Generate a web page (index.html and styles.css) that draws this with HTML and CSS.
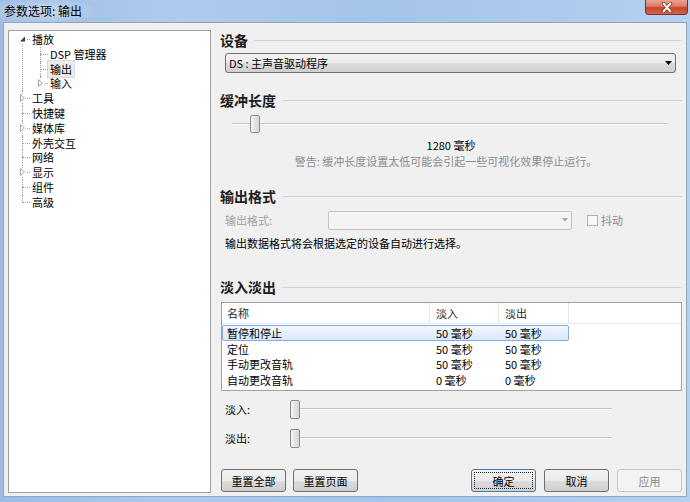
FILE: index.html
```html
<!DOCTYPE html>
<html lang="zh-CN">
<head>
    <meta charset="UTF-8">
    <title>参数选项: 输出</title>
    <link rel="stylesheet" href="styles.css">
</head>
<body>
<div class="window">
    <div class="titlebar">
        <span class="title">参数选项: 输出</span>
        <div class="close-btn">
            <svg width="14" height="11" viewBox="0 0 14 11">
                <path d="M3.5 1.5 L10.5 9.5 M10.5 1.5 L3.5 9.5" stroke="#6b2418" stroke-width="3.4" stroke-linecap="round"/>
                <path d="M3.5 1.5 L10.5 9.5 M10.5 1.5 L3.5 9.5" stroke="#fff" stroke-width="1.9" stroke-linecap="round"/>
            </svg>
        </div>
    </div>

    <div class="content">
        <!-- left tree -->
        <div class="tree-panel">
            <div class="item first">
                <div class="row">
                    <svg class="toggle" width="7" height="8" viewBox="0 0 7 8"><path d="M6 1.5 L6 6.5 L1 6.5 Z" fill="#3c3c3c"/></svg>
                    播放
                </div>
                <div class="children">
                    <div class="item"><div class="row">DSP 管理器</div></div>
                    <div class="item"><div class="row"><span class="sel">输出</span></div></div>
                    <div class="item last">
                        <div class="row">
                            <svg class="toggle" width="7" height="8" viewBox="0 0 7 8"><path d="M1.5 0.5 L5.5 4 L1.5 7.5 Z" fill="#fff" stroke="#a6a6a6"/></svg>
                            输入
                        </div>
                    </div>
                </div>
            </div>
            <div class="item">
                <div class="row">
                    <svg class="toggle" width="7" height="8" viewBox="0 0 7 8"><path d="M1.5 0.5 L5.5 4 L1.5 7.5 Z" fill="#fff" stroke="#a6a6a6"/></svg>
                    工具
                </div>
            </div>
            <div class="item"><div class="row">快捷键</div></div>
            <div class="item">
                <div class="row">
                    <svg class="toggle" width="7" height="8" viewBox="0 0 7 8"><path d="M1.5 0.5 L5.5 4 L1.5 7.5 Z" fill="#fff" stroke="#a6a6a6"/></svg>
                    媒体库
                </div>
            </div>
            <div class="item"><div class="row">外壳交互</div></div>
            <div class="item"><div class="row">网络</div></div>
            <div class="item">
                <div class="row">
                    <svg class="toggle" width="7" height="8" viewBox="0 0 7 8"><path d="M1.5 0.5 L5.5 4 L1.5 7.5 Z" fill="#fff" stroke="#a6a6a6"/></svg>
                    显示
                </div>
            </div>
            <div class="item"><div class="row">组件</div></div>
            <div class="item last"><div class="row">高级</div></div>
        </div>

        <!-- right page -->
        <div class="page">
            <div class="section-head">设备</div>
            <div class="combo">
                <span>DS : 主声音驱动程序</span>
                <svg width="7" height="4" viewBox="0 0 7 4"><path d="M0 0 L7 0 L3.5 4 Z" fill="#000"/></svg>
            </div>

            <div class="section-head buffer-head">缓冲长度</div>
            <div class="slider buffer-slider">
                <div class="thumb" style="margin-left: 18px"></div>
            </div>
            <div class="buffer-value">1280 毫秒</div>
            <div class="warning">警告: 缓冲长度设置太低可能会引起一些可视化效果停止运行。</div>

            <div class="section-head format-head">输出格式</div>
            <div class="format-row">
                <span class="format-label">输出格式:</span>
                <div class="combo disabled">
                    <span></span>
                    <svg width="6" height="4" viewBox="0 0 6 4"><path d="M0 0 L6 0 L3 3.5 Z" fill="#a8a8a8"/></svg>
                </div>
                <div class="check"><span class="box"></span>抖动</div>
            </div>
            <div class="info">输出数据格式将会根据选定的设备自动进行选择。</div>

            <div class="section-head fade-head">淡入淡出</div>
            <div class="list">
                <div class="list-header">
                    <div>名称</div>
                    <div>淡入</div>
                    <div>淡出</div>
                    <div class="filler"></div>
                </div>
                <div class="list-row selected"><div>暂停和停止</div><div>50 毫秒</div><div>50 毫秒</div></div>
                <div class="list-row"><div>定位</div><div>50 毫秒</div><div>50 毫秒</div></div>
                <div class="list-row"><div>手动更改音轨</div><div>50 毫秒</div><div>50 毫秒</div></div>
                <div class="list-row"><div>自动更改音轨</div><div>0 毫秒</div><div>0 毫秒</div></div>
            </div>

            <div class="fade-row">
                <span class="fade-label">淡入:</span>
                <div class="slider fade-slider"><div class="thumb"></div></div>
            </div>
            <div class="fade-row second">
                <span class="fade-label">淡出:</span>
                <div class="slider fade-slider"><div class="thumb"></div></div>
            </div>

            <div class="buttons">
                <div class="btn-group">
                    <button class="btn">重置全部</button>
                    <button class="btn">重置页面</button>
                </div>
                <div class="btn-group">
                    <button class="btn default"><span>确定</span></button>
                    <button class="btn">取消</button>
                    <button class="btn" disabled>应用</button>
                </div>
            </div>
        </div>
    </div>
</div>
</body>
</html>
```

FILE: styles.css
```css
* {
    box-sizing: border-box;
}
body {
    margin: 0;
    font-family: "Noto Sans CJK SC", "Liberation Sans", sans-serif;
    font-size: 11px;
    color: #000;
    background: #a8c6ea;
}
.window {
    width: 690px;
    height: 502px;
    display: flex;
    flex-direction: column;
    background: linear-gradient(to right, #9dbce2 0%, #aecbee 25%, #a5c4e9 55%, #b4d0f0 100%);
}

/* title bar */
.titlebar {
    height: 22px;
    display: flex;
    align-items: flex-start;
    background: radial-gradient(ellipse 60px 14px at 40px 11px, rgba(255, 255, 255, 0.45), rgba(255, 255, 255, 0));
}
.title {
    font-size: 12px;
    line-height: 22px;
    padding-left: 4px;
    color: #000;
}
.close-btn {
    margin-left: auto;
    margin-right: 2px;
    width: 43px;
    height: 15px;
    border: 1px solid #7b3325;
    border-top: none;
    border-radius: 0 0 4px 4px;
    background: linear-gradient(#eaa694 0%, #dc7a62 45%, #c7432b 55%, #d4654b 100%);
    display: flex;
    align-items: center;
    justify-content: center;
}

/* dialog body */
.content {
    flex: 1;
    margin: 0 3px 5px;
    background: #f0f0f0;
    border: 1px solid #8fa6c1;
    display: flex;
    padding: 7px 4px 3px 4px;
}

/* tree */
.tree-panel {
    width: 203px;
    margin-right: 9px;
    background: #fff;
    border: 1px solid #a0a0a0;
    padding: 1px 0 0 13px;
    font-size: 11px;
}
.item {
    position: relative;
    padding-left: 10px;
}
.item::before {
    content: "";
    position: absolute;
    left: 0;
    top: 0;
    bottom: 0;
    border-left: 1px dotted #a0a0a0;
}
.item.first::before {
    top: 9px;
}
.item.last::before {
    bottom: auto;
    height: 8px;
}
.row {
    position: relative;
    height: 14.8px;
    line-height: 14.8px;
    white-space: nowrap;
}
.row::before {
    content: "";
    position: absolute;
    left: -10px;
    width: 8px;
    top: 7px;
    border-top: 1px dotted #a0a0a0;
}
.toggle {
    position: absolute;
    left: -13px;
    top: 3px;
    background: #fff;
}
.children {
    padding-left: 8px;
}
.sel {
    margin-left: -3px;
    padding: 0 2px;
    border: 1px solid #d9d9d9;
    background: #ececec;
}

/* right page */
.page {
    width: 462px;
    display: flex;
    flex-direction: column;
}
.section-head {
    display: flex;
    align-items: center;
    height: 16px;
    margin-top: 2px;
    font-size: 14px;
    font-weight: bold;
    color: #1c1c1c;
}
.section-head::after {
    content: "";
    flex: 1;
    margin-left: 6px;
    border-top: 1px solid #d2d2d2;
}
.buffer-head {
    margin-top: 19px;
}
.format-head {
    margin-top: 19px;
}
.fade-head {
    margin-top: 29px;
}

.combo {
    height: 20px;
    margin: 5px 6px 0 5px;
    padding: 0 3px 0 3px;
    border: 1px solid #707070;
    border-radius: 3px;
    background: linear-gradient(#f2f2f2 0%, #ebebeb 50%, #dddddd 51%, #cfcfcf 100%);
    display: flex;
    align-items: center;
    justify-content: space-between;
    font-size: 11px;
}
.combo.disabled {
    width: 244px;
    height: 19px;
    margin: 0;
    border-color: #c2c5c8;
    border-radius: 2px;
    background: #f4f4f4;
}

/* sliders */
.slider {
    display: flex;
    height: 18px;
    background: linear-gradient(transparent 8px, #c4c4c4 8px, #c4c4c4 9px, #fdfdfd 9px, #fdfdfd 10px, transparent 10px);
}
.thumb {
    width: 10px;
    height: 18px;
    border: 1px solid #8a8a8a;
    border-radius: 2px;
    background: linear-gradient(to right, #f7f7f7, #e4e4e4 50%, #d6d6d6);
}
.buffer-slider {
    margin: 7px 0 0 12px;
    width: 436px;
}
.buffer-value {
    margin-top: 5px;
    height: 15px;
    line-height: 15px;
    text-align: center;
}
.warning {
    margin-top: 1px;
    height: 15px;
    line-height: 15px;
    text-align: center;
    color: #8c8c8c;
    padding-right: 10px;
}

.format-row {
    margin: 6px 0 0 5px;
    height: 20px;
    display: flex;
    align-items: center;
}
.format-label {
    width: 103px;
    color: #a0a0a0;
}
.check {
    display: flex;
    align-items: center;
    margin-left: 15px;
    color: #8a8a8a;
}
.check .box {
    width: 11px;
    height: 11px;
    margin-right: 3px;
    border: 1px solid #b1b1b1;
    background: #f7f7f7;
}
.info {
    margin: 6px 0 0 5px;
    line-height: 14px;
}

/* fade list */
.list {
    margin: 7px 0 0 1px;
    height: 89px;
    border: 1px solid #a0a0a0;
    background: #fff;
}
.list-header {
    display: grid;
    grid-template-columns: 208px 69px 70px 1fr;
    height: 21px;
    border-bottom: 1px solid #ebebeb;
}
.list-header div {
    line-height: 20px;
    padding-left: 5px;
    border-right: 1px solid #e3e3e3;
    color: #1e1e1e;
}
.list-header div:nth-child(2),
.list-header div:nth-child(3) {
    padding-left: 6px;
}
.list-header .filler {
    border-right: none;
}
.list-row {
    display: grid;
    grid-template-columns: 208px 69px 70px;
    width: 347px;
    height: 15.7px;
    line-height: 14px;
    border: 1px solid transparent;
}
.list-row div {
    padding-left: 4px;
}
.list-row div:nth-child(2),
.list-row div:nth-child(3) {
    padding-left: 5px;
}
.list-header + .list-row {
    margin-top: 1px;
}
.list-row.selected {
    border-color: #84acdd;
    border-radius: 2px;
    background: linear-gradient(#f2f8fe, #d8e8fb);
}

.fade-row {
    display: flex;
    align-items: center;
    height: 20px;
    margin: 8px 0 0 5px;
}
.fade-row.second {
    margin-top: 9px;
}
.fade-label {
    width: 65px;
}
.fade-slider {
    width: 322px;
    height: 19px;
}
.fade-slider .thumb {
    height: 19px;
}

/* buttons */
.buttons {
    margin-top: 21px;
    display: flex;
    justify-content: space-between;
}
.btn-group {
    display: flex;
    gap: 8px;
}
.btn-group:first-child {
    margin-left: 1px;
    gap: 7px;
}
.btn {
    width: 65px;
    height: 23px;
    padding: 0;
    font-family: inherit;
    font-size: 11px;
    color: #000;
    border: 1px solid #707070;
    border-radius: 3px;
    background: linear-gradient(#f2f2f2 0%, #ebebeb 50%, #dddddd 51%, #cfcfcf 100%);
}
.btn.default {
    border-color: #3c7fb1;
    padding: 2px;
}
.btn.default span {
    display: flex;
    align-items: center;
    justify-content: center;
    height: 100%;
    border: 1px dotted #222;
}
.btn:disabled {
    color: #8a8a8a;
    border-color: #c2c5c8;
    background: #f4f4f4;
}
```
